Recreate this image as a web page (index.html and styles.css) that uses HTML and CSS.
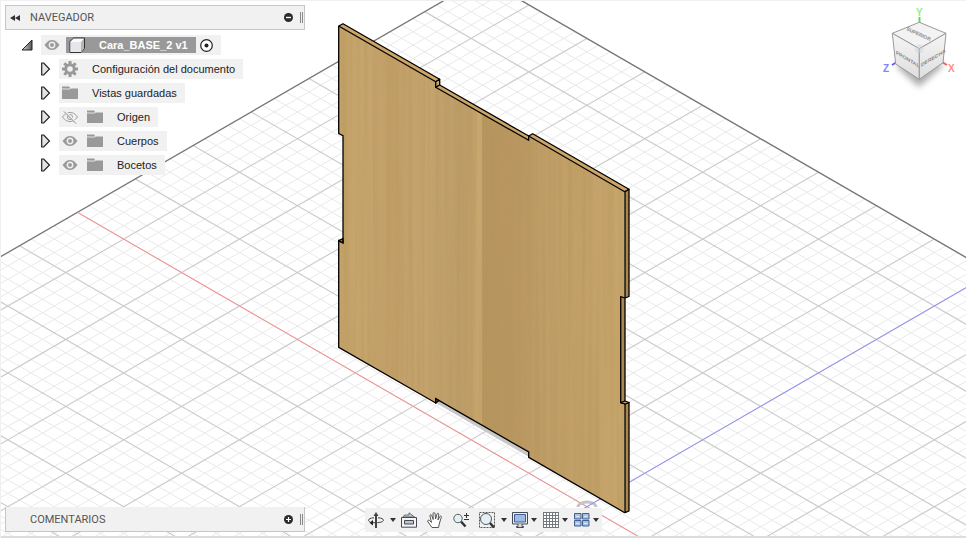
FILE: index.html
```
<!DOCTYPE html>
<html lang="es">

<head>
  <meta charset="UTF-8">
  <meta name="viewport" content="width=device-width, initial-scale=1.0">
  <title>Cara_BASE_2 v1</title>
  <link rel="stylesheet" href="styles.css">
</head>

<body>
  <!-- shared icons -->
  <svg class="sprite" aria-hidden="true">
    <symbol id="eye" viewBox="0 0 16 16">
      <path d="M0.5 8C3 4.300 5.500 3 8 3s5 1.300 7.500 5C13 11.700 10.500 13 8 13S3 11.700 0.500 8z" fill="#9b9b9b"/>
      <circle cx="8" cy="8" r="2.700" fill="#9b9b9b" stroke="#f1f1f1" stroke-width="1.400"/>
    </symbol>
    <symbol id="eye-off" viewBox="0 0 16 16">
      <path d="M0.500 8C3 4.500 5.500 3.500 8 3.500s5 1 7.500 4.500C13 11.500 10.500 12.500 8 12.500S3 11.500 0.500 8z" fill="none" stroke="#9b9b9b"/>
      <circle cx="8" cy="8" r="2.500" fill="none" stroke="#9b9b9b"/>
      <path d="M2.500 2l12 12" stroke="#f1f1f1" stroke-width="2"/>
      <path d="M2 2.500l12 12" stroke="#8a8a8a"/>
    </symbol>
    <symbol id="folder" viewBox="0 0 16 16">
      <path d="M0 1.500h7l1.500 2H16V14H0z" fill="#999"/>
      <path d="M0 4h8l1-1" fill="none" stroke="#e4e4e4"/>
    </symbol>
    <symbol id="arrow" viewBox="0 0 10 14">
      <path d="M.7 1h2l5.800 6-5.800 6H.7z" fill="#e3e3e8" stroke="#222" stroke-width="1.200"/>
    </symbol>
    <symbol id="caret" viewBox="0 0 6 4">
      <path d="M0 0h6L3 4z" fill="#333"/>
    </symbol>
  </svg>

  <svg class="viewport" viewBox="0 0 966 538" preserveAspectRatio="xMidYMid slice" aria-hidden="true">
    <defs>
      <linearGradient id="wood" gradientUnits="userSpaceOnUse" x1="338" y1="0" x2="629" y2="0">
        <stop offset="0" stop-color="#c3a168"/>
        <stop offset="0.080" stop-color="#c7a66e"/>
        <stop offset="0.180" stop-color="#c29f68"/>
        <stop offset="0.300" stop-color="#c5a46e"/>
        <stop offset="0.420" stop-color="#be9d69"/>
        <stop offset="0.460" stop-color="#c09f67"/>
        <stop offset="0.475" stop-color="#c9a870"/>
        <stop offset="0.493" stop-color="#c8a76e"/>
        <stop offset="0.497" stop-color="#b6955e"/>
        <stop offset="0.600" stop-color="#b99660"/>
        <stop offset="0.720" stop-color="#c09e67"/>
        <stop offset="0.850" stop-color="#c3a169"/>
        <stop offset="1" stop-color="#c7a66c"/>
      </linearGradient>
      <filter id="grain" x="0" y="0" width="1" height="1">
        <feTurbulence type="fractalNoise" baseFrequency="0.280 0.003" numOctaves="2" seed="7"/>
        <feColorMatrix values="0 0 0 0 0.450  0 0 0 0 0.300  0 0 0 0 0.100  0.900 0 0 0 -0.300"/>
        <feComposite in2="SourceAlpha" operator="in"/>
      </filter>
    </defs>

    <g id="grid"></g>
    <path d="M586.900 506.700L77.400 212.300M586.900 506.700L645 540.300" stroke="#ff9090"/>
    <path d="M578 507a9 5 0 0 1 18 0" fill="none" stroke="#c4c4c4" stroke-width="3"/>
    <path d="M586.900 506.700L966 287.700M586.900 506.700L560 522" stroke="#9090ff"/>

    <!-- board -->
    <path d="M436 403l3-3 90 53v4z" fill="#c8c8c8"/>
    <path id="board" fill="url(#wood)" d="M338.700 26V133.700L343 135.700V243L338.700 240.700V347.300L435.700 403V398.700L528.700 452V457.300L624.700 512.700V404L620.700 402.700V296.700L624.700 298V191.700L528.700 136V140.300L435.700 87.300V81.700z"/>
    <use href="#board" filter="url(#grain)"/>
    <g fill="#cda566" stroke="#000" stroke-width="1.300" stroke-linejoin="round">
      <path d="M338.700 26L343 23.700L439.700 79.300L435.700 81.700z"/>
      <path d="M435.700 81.700L439.700 79.300V85L435.700 87.300z"/>
      <path d="M435.700 87.300L439.700 85L528.700 136V140.300z"/>
      <path d="M528.700 136L532.700 133.700L629 189.300L624.700 191.700z"/>
    </g>
    <g fill="#a9874f" stroke="#000" stroke-width="1.300" stroke-linejoin="round">
      <path d="M625 191.700L629 189.300V296.500L625 298z"/>
      <path d="M620.700 296.700L625 298V404L620.700 402.700z"/>
      <path d="M625 404L629 402.500V511L625 512.700z"/>
      <path d="M620.700 402.700L625 401L629 402.500L625 404z" fill="#cda566"/>
      <path d="M338.700 240.700L343 238.500V243z"/>
      <path d="M435.700 398.700L439 400.500L435.700 403z"/>
    </g>
    <path d="M338.700 26V133.700L343 135.700V243L338.700 240.700V347.300L435.700 403V398.700L528.700 452V457.300L624.700 512.700" fill="none" stroke="#000" stroke-width="1.300"/>
  </svg>

  <div class="app">
    <header class="top">
      <section class="browser">
        <div class="panel-title">
          <button class="plain collapse" aria-label="Contraer">
            <svg width="10" height="6" viewBox="0 0 10 6"><path d="M5 0v6L0 3zM10 0v6L5 3z" fill="#333"/></svg>
          </button>
          <h2>NAVEGADOR</h2>
          <button class="plain" aria-label="Ocultar panel">
            <svg width="9" height="9" viewBox="0 0 9 9"><circle cx="4.500" cy="4.500" r="4.500" fill="#2b2b2b"/><path d="M2 4.500h5" stroke="#fff" stroke-width="1.400"/></svg>
          </button>
          <span class="grip"></span>
        </div>
        <ul class="tree">
          <li class="root">
            <svg width="12" height="12" viewBox="0 0 12 12"><defs><linearGradient id="tri"><stop offset="0" stop-color="#ddd"/><stop offset="1" stop-color="#555"/></linearGradient></defs><path d="M11 1v10H1z" fill="url(#tri)" stroke="#222"/></svg>
            <div class="node">
              <svg class="icon"><use href="#eye"/></svg>
              <span class="selected">
                <svg class="icon" viewBox="0 0 16 16"><path d="M1 4.500L4.500 1h11v10.500L12 15.500H1z" fill="#fafafa" stroke="#333"/><path d="M12 5l3-3.500v10l-3 3.500z" fill="#b5b5ba"/><path d="M1.500 5h10.500v10h-10.500z" fill="#e6e7ec"/></svg>
                Cara_BASE_2 v1
              </span>
              <svg width="13" height="13" viewBox="0 0 13 13"><circle cx="6.500" cy="6.500" r="5.800" fill="#fff" stroke="#222" stroke-width="1.200"/><circle cx="6.500" cy="6.500" r="2" fill="#222"/></svg>
            </div>
          </li>
          <li>
            <svg class="arrow"><use href="#arrow"/></svg>
            <div class="node">
              <svg class="icon" viewBox="0 0 16 16"><circle cx="8" cy="8" r="4.300" fill="none" stroke="#999" stroke-width="3"/><path d="M8 0v3M8 13v3M0 8h3M13 8h3M2.300 2.300l2.200 2.200M11.500 11.500l2.200 2.200M2.300 13.700l2.200-2.200M11.500 4.500l2.200-2.200" stroke="#999" stroke-width="3"/></svg>
              <span>Configuración del documento</span>
            </div>
          </li>
          <li>
            <svg class="arrow"><use href="#arrow"/></svg>
            <div class="node">
              <svg class="icon"><use href="#folder"/></svg>
              <span>Vistas guardadas</span>
            </div>
          </li>
          <li>
            <svg class="arrow"><use href="#arrow"/></svg>
            <div class="node">
              <svg class="icon"><use href="#eye-off"/></svg>
              <svg class="icon folder"><use href="#folder"/></svg>
              <span>Origen</span>
            </div>
          </li>
          <li>
            <svg class="arrow"><use href="#arrow"/></svg>
            <div class="node">
              <svg class="icon"><use href="#eye"/></svg>
              <svg class="icon folder"><use href="#folder"/></svg>
              <span>Cuerpos</span>
            </div>
          </li>
          <li>
            <svg class="arrow"><use href="#arrow"/></svg>
            <div class="node">
              <svg class="icon"><use href="#eye"/></svg>
              <svg class="icon folder"><use href="#folder"/></svg>
              <span>Bocetos</span>
            </div>
          </li>
        </ul>
      </section>

      <svg class="viewcube" viewBox="0 0 96 96" role="img" aria-label="ViewCube">
        <defs>
          <filter id="soft" x="-50%" y="-50%" width="200%" height="200%"><feGaussianBlur stdDeviation="3"/></filter>
          <linearGradient id="faceL" x2="0" y2="1"><stop offset="0" stop-color="#f5f5f5"/><stop offset="1" stop-color="#dedede"/></linearGradient>
        </defs>
        <path d="M26 66L49 54L74 65L49 87z" fill="#888" opacity="0.700" filter="url(#soft)"/>
        <path d="M49.500 17v6" stroke="#4fe04f" stroke-width="2"/>
        <path d="M27 62l-5 3" stroke="#5c5ce8" stroke-width="2"/>
        <path d="M72 62l5 3" stroke="#f06060" stroke-width="2"/>
        <g stroke="#999" stroke-linejoin="round">
          <path d="M49.300 22.300L76 33.300L49.300 48.700L22.300 33.300z" fill="#f3f3f3"/>
          <path d="M22.300 33.300L49.300 48.700V79.300L25.700 64z" fill="url(#faceL)"/>
          <path d="M76 33.300L49.300 48.700V79.300L73 62.700z" fill="url(#faceL)"/>
        </g>
        <circle cx="49.300" cy="48.700" r="4.500" fill="#ccd0da" opacity="0.450"/>
        <g class="face">
          <text transform="translate(36 30) rotate(25)">SUPERIOR</text>
          <text transform="translate(26 54) skewY(31)">FRONTAL</text>
          <text transform="translate(51 67) skewY(-31)">DERECHA</text>
        </g>
        <g class="axis">
          <text x="46" y="16" fill="#90f090">Y</text>
          <text x="13" y="72" fill="#8585f5">Z</text>
          <text x="78" y="72" fill="#ff8c8c">X</text>
        </g>
      </svg>
    </header>

    <footer class="bottom">
      <section class="panel-title comments">
        <h2>COMENTARIOS</h2>
        <button class="plain" aria-label="Mostrar comentarios">
          <svg width="9" height="9" viewBox="0 0 9 9"><circle cx="4.500" cy="4.500" r="4.500" fill="#2b2b2b"/><path d="M2 4.500h5M4.500 2v5" stroke="#fff" stroke-width="1.200"/></svg>
        </button>
        <span class="grip"></span>
      </section>
      <nav class="toolbar">
        <button class="plain drop" aria-label="Órbita">
          <svg class="icon" viewBox="0 0 16 16"><path d="M8 2v14" stroke="#444" stroke-width="2"/><path d="M5.500 4L8 0L10.500 4z" fill="#444"/><path d="M10 5.800c3.500.2 5.500 1.200 5.500 2.400 0 1.500-3.500 2.500-7.500 2.500H4" fill="none" stroke="#444"/><path d="M6 5.800C2.500 6 .5 7 .5 8.200c0 .6.500 1.200 1.500 1.600" fill="none" stroke="#444"/><path d="M5 8v5.400L1.500 10.700z" fill="#222"/></svg>
          <svg class="caret"><use href="#caret"/></svg>
        </button>
        <button class="plain" aria-label="Mirar a">
          <svg class="icon" viewBox="0 0 16 16"><path d="M2 5L3.500 3H8V.8L13.500 5z" fill="#c9cdd2" stroke="#666b73"/><path d="M.5 5.500h15v9.700h-15z" fill="#f4f4f4" stroke="#444b55"/><path d="M3.500 8.500h9v3.500h-9z" fill="#bcc5d0" stroke="#444b55"/></svg>
        </button>
        <button class="plain" aria-label="Encuadre">
          <svg class="icon" viewBox="0 0 16 16"><path d="M5 15.500L1 10C0 8.500 1.500 7.500 2.500 8.500L4.500 10.500L3 4c-.3-1.500 1.300-1.800 1.700-.5L6.200 7.500L6 1.700C6 .2 7.800.2 8 1.700L8.600 7L10 2c.4-1.300 2-.9 1.700.5L11 8l1.800-3.500c.7-1 2-.4 1.500.8L12.500 11l-1 4.500z" fill="#fff" stroke="#555"/></svg>
        </button>
        <button class="plain" aria-label="Zoom">
          <svg class="icon" viewBox="0 0 16 16"><path d="M8 9.500l4.500 5" stroke="#333" stroke-width="2.500"/><circle cx="5" cy="6.500" r="4.200" fill="#e4f0f2" stroke="#555b64"/><path d="M11 3.500h5M13.500 1v5M11 7.500h5" stroke="#333"/></svg>
        </button>
        <button class="plain drop" aria-label="Ajustar">
          <svg class="icon" viewBox="0 0 16 16"><path d="M.5.5h15v15H.5z" fill="none" stroke="#555" stroke-dasharray="2 1"/><path d="M10.500 10.500l4.500 5" stroke="#333" stroke-width="2.500"/><circle cx="7" cy="7" r="5.500" fill="#e4f0f2" stroke="#555b64"/></svg>
          <svg class="caret"><use href="#caret"/></svg>
        </button>
        <button class="plain drop near" aria-label="Configuración de visualización">
          <svg class="icon" viewBox="0 0 16 16"><path d="M.5.5h15v11.500H.5z" fill="#eee" stroke="#444b55"/><path d="M2.500 2.500h11v7.500h-11z" fill="#9dbbe4" stroke="#3e5f96"/><path d="M6 12v2.500H4.500v1h7v-1H10V12" fill="#ddd" stroke="#444b55"/></svg>
          <svg class="caret"><use href="#caret"/></svg>
        </button>
        <button class="plain drop near" aria-label="Rejilla y forzados">
          <svg class="icon" viewBox="0 0 16 16"><path d="M.5.5h15v15H.5z" fill="#fff"/><path d="M.5 0v16M3.500 0v16M6.500 0v16M9.500 0v16M12.500 0v16M15.500 0v16M0 .5h16M0 3.500h16M0 6.500h16M0 9.500h16M0 12.500h16M0 15.500h16" stroke="#73777e"/></svg>
          <svg class="caret"><use href="#caret"/></svg>
        </button>
        <button class="plain drop near" aria-label="Ventanas gráficas">
          <svg class="icon" viewBox="0 0 16 16"><path d="M.5 1.500h6.500v5.500H.5zM8.500 1.500h6.500v5.500H8.500zM.5 8.500h6.500v5.500H.5zM8.500 8.500h6.500v5.500H8.500z" fill="#a9c2e6" stroke="#44608d"/><path d="M2 4.500h3.500M10 4.500h3.500M2 11.500h3.500M10 11.500h3.500" stroke="#dbe7f8"/></svg>
          <svg class="caret"><use href="#caret"/></svg>
        </button>
      </nav>
    </footer>
  </div>

  <script src="script.js"></script>
</body>

</html>
```
FILE: styles.css
```
* {
  box-sizing: border-box;
}

body {
  margin: 0;
  background-color: #fff;
  font-family: "Liberation Sans", Arial, sans-serif;
  font-size: 11px;
  color: #222;
}

.sprite {
  position: absolute;
  width: 0;
  height: 0;
}

.viewport {
  position: absolute;
  top: 0;
  left: 0;
  width: 100%;
  height: 100%;
}

.app {
  position: relative;
  display: flex;
  flex-direction: column;
  justify-content: space-between;
  min-height: 100vh;
  border-top: 1px solid #f0f0f0;
  border-left: 1px solid #f0f0f0;
}

.app svg {
  display: block;
  flex: none;
}

.plain {
  display: flex;
  align-items: center;
  padding: 0;
  border: none;
  background: none;
  cursor: pointer;
}

.icon {
  width: 16px;
  height: 16px;
}

/* panels */
.top {
  display: flex;
  justify-content: space-between;
  align-items: flex-start;
}

.browser {
  padding: 4px;
}

.panel-title {
  display: flex;
  align-items: center;
  width: 300px;
  height: 25px;
  padding: 0 1px 0 4px;
  border: 1px solid #c6c6c6;
  background-color: #f1f1f1;
}

.panel-title h2 {
  flex: 1;
  margin: 0;
  font-family: Roboto, sans-serif;
  font-size: 11px;
  font-weight: normal;
  color: #555;
}

.collapse {
  width: 20px;
}

.grip {
  width: 3px;
  height: 11px;
  margin-left: 7px;
  border: 1px solid #888;
  border-width: 0 1px;
}

/* tree */
.tree {
  display: flex;
  flex-direction: column;
  gap: 4px;
  margin: 5px 0 0;
  padding: 0 0 0 36px;
  list-style: none;
}

.tree li {
  display: flex;
  align-items: center;
  gap: 8px;
}

.tree .root {
  margin-left: -20px;
}

.arrow {
  width: 10px;
  height: 14px;
}

.node {
  display: flex;
  align-items: center;
  height: 20px;
  padding: 0 8px 0 3px;
  background-color: #f1f1f1;
}

.node span {
  margin-left: 14px;
}

.folder {
  margin-left: 9px;
}

.node .selected {
  display: flex;
  align-items: center;
  gap: 14px;
  height: 16px;
  margin: 0 4px 0 6px;
  padding: 0 8px 0 3px;
  background-color: #999;
  color: #fff;
  font-weight: bold;
}

/* view cube */
.viewcube {
  width: 96px;
  height: 96px;
  margin-top: -1px;
}

.face {
  font-size: 5px;
  font-weight: bold;
  fill: #85878c;
}

.axis {
  font-size: 10px;
  font-weight: bold;
}

/* bottom */
.bottom {
  display: grid;
  grid-template-columns: 1fr auto 1fr;
  align-items: center;
  padding: 0 4px 4px;
  border-bottom: 2px solid #dcdcdc;
}

.comments {
  padding-left: 24px;
  border-top: none;
}

.toolbar {
  display: flex;
  align-items: center;
  gap: 10px;
  height: 24px;
  padding: 0 3px;
  background-color: #f1f1f1;
}

.drop {
  gap: 6px;
  margin-right: -5px;
}

.near {
  gap: 3px;
  margin-right: -4px;
}

.near:last-child {
  margin-right: 0;
}

.caret {
  width: 6px;
  height: 4px;
}
```
FILE: script.js
```
// isometric ground grid: u goes down right, v goes up right
const origin = { x: 586.9, y: 506.7 };
const dx = 57.9;
const dy = 33.45;
const uMin = -8.8;
const uMax = 7;
const vMin = -7;
const vMax = 7;

function point(u, v) {
  return (origin.x + (u + v) * dx) + ' ' + (origin.y + (u - v) * dy);
}

function line(u1, v1, u2, v2) {
  return 'M' + point(u1, v1) + 'L' + point(u2, v2);
}

function addPath(d, color, width) {
  const path = document.createElementNS('http://www.w3.org/2000/svg', 'path');
  path.setAttribute('d', d);
  path.setAttribute('stroke', color);
  path.setAttribute('stroke-width', width);
  document.getElementById('grid').appendChild(path);
}

let minor = '';
let major = '';

// five small cells per big cell
for (let i = Math.round(uMin * 5); i <= uMax * 5; i++) {
  const d = line(i / 5, vMin, i / 5, vMax);
  if (i % 5 === 0) major += d;
  else minor += d;
}
for (let i = vMin * 5; i <= vMax * 5; i++) {
  const d = line(uMin, i / 5, uMax, i / 5);
  if (i % 5 === 0) major += d;
  else minor += d;
}

addPath(minor, '#e9e9e9', 1);
addPath(major, '#cccccc', 1.2);
addPath(line(uMin, vMin, uMin, vMax) + line(uMin, vMax, uMax, vMax), '#777', 1.3);
```
